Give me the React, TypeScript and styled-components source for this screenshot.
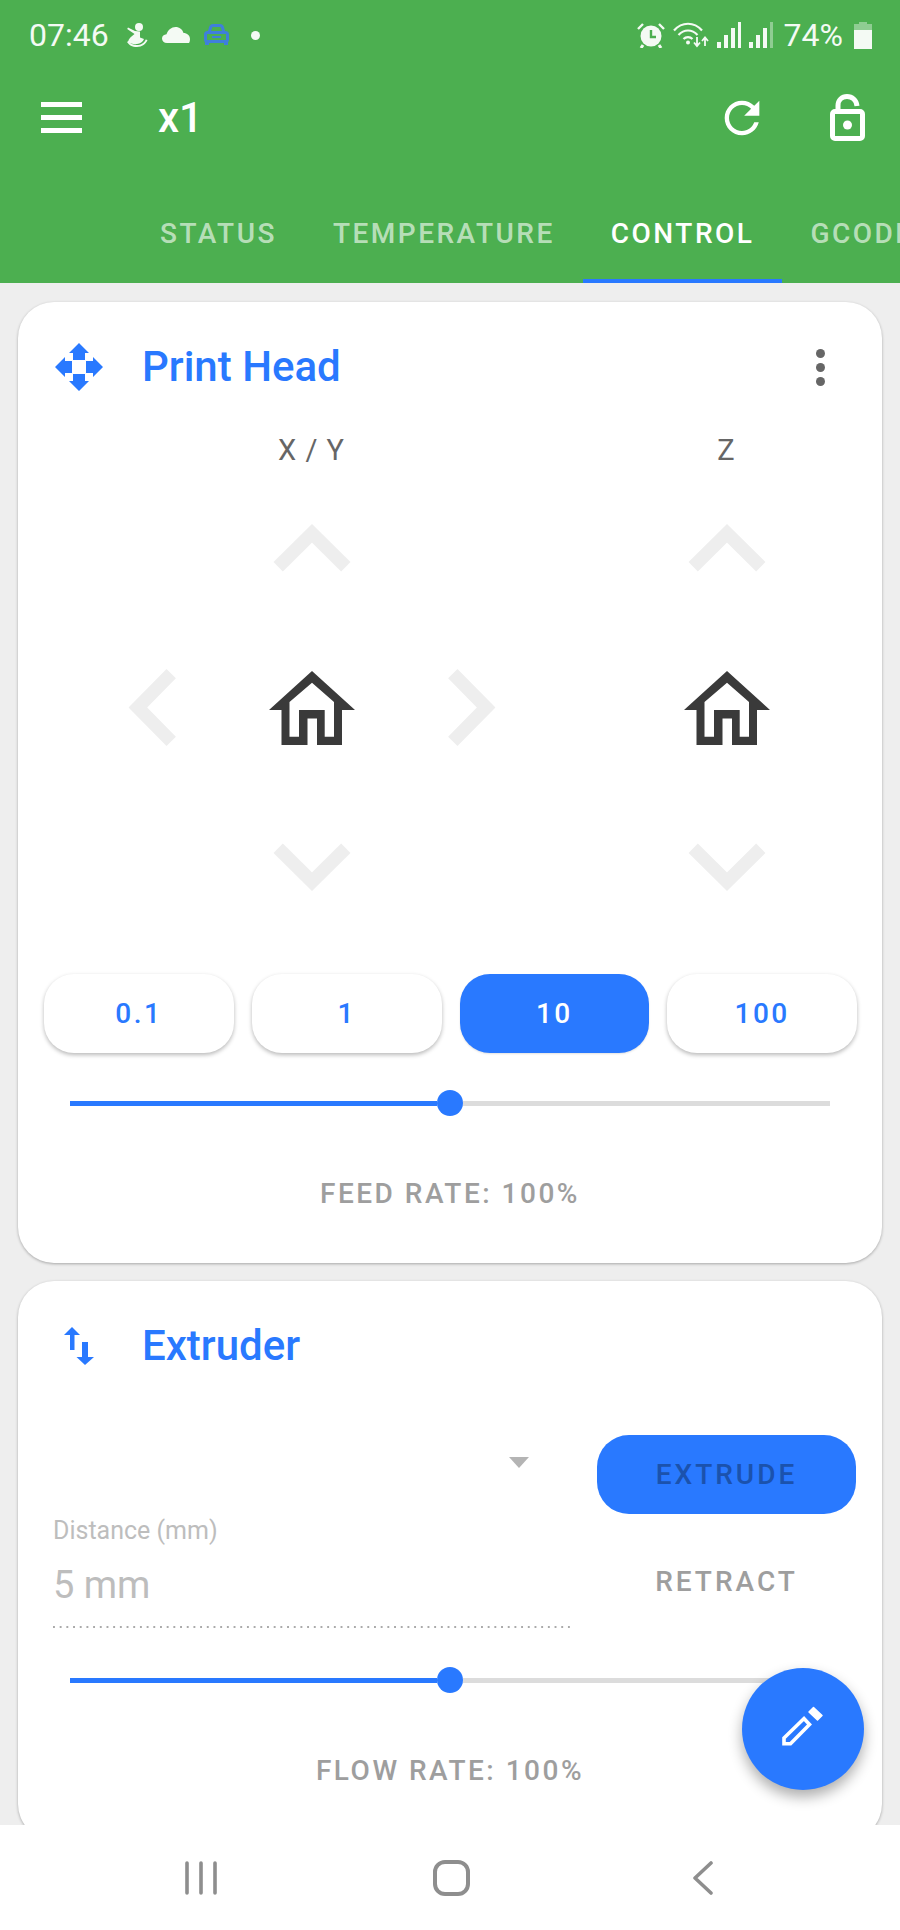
import React from 'react'
import styled, { createGlobalStyle } from 'styled-components'

const BLUE = '#2979ff'
const GREEN = '#4caf50'

const GlobalStyle = createGlobalStyle`
    html, body {
        margin: 0;
        padding: 0;
        background: #eeeeee;
        font-family: Roboto, "Liberation Sans", sans-serif;
    }
`

const Page = styled.div`
    position: relative;
    width: 900px;
    height: 1930px;
    display: flex;
    flex-direction: column;
    overflow: hidden;
    background: #eeeeee;
`

const AppBar = styled.header`
    height: 283px;
    flex: none;
    background: ${GREEN};
    color: #fff;
`

const StatusBar = styled.div`
    height: 70px;
    padding: 0 28px 0 29px;
    display: flex;
    align-items: center;
    justify-content: space-between;
`

const StatusGroup = styled.div`
    display: flex;
    align-items: center;
    gap: 14px;
`

const StatusRight = styled(StatusGroup)`
    gap: 8px;
`

const StatusText = styled.span`
    font-size: 32px;
    line-height: 40px;
    color: #f4faf4;
    margin: 0 3px;
`

const Clock = styled(StatusText)`
    margin: 0 3px 0 0;
`

const Dot = styled.span`
    width: 9px;
    height: 9px;
    margin-left: 8px;
    border-radius: 50%;
    background: #f4faf4;
`

const Toolbar = styled.div`
    height: 95px;
    padding: 0 35px 0 41px;
    display: flex;
    align-items: center;
`

const Burger = styled.div`
    width: 41px;
    display: flex;
    flex-direction: column;
    gap: 8px;

    span {
        height: 5px;
        background: #fff;
    }
`

const AppTitle = styled.div`
    margin-left: 76px;
    font-size: 42px;
    font-weight: 500;
    line-height: 50px;
`

const ToolbarActions = styled.div`
    margin-left: auto;
    display: flex;
    align-items: center;
    gap: 62px;
`

const Tabs = styled.nav`
    margin-top: 18px;
    height: 100px;
    padding-left: 132px;
    display: flex;
    overflow: hidden;
`

const Tab = styled.div<{ $active?: boolean }>`
    flex: none;
    padding: 0 28px;
    display: flex;
    align-items: center;
    box-sizing: border-box;
    font-size: 28px;
    font-weight: 500;
    letter-spacing: 2.5px;
    color: ${p => p.$active ? '#fff' : 'rgba(255,255,255,.62)'};
    border-bottom: 4px solid ${p => p.$active ? BLUE : 'transparent'};
    padding-top: 4px;
`

const Content = styled.main`
    flex: 1;
    min-height: 0;
    padding: 19px 18px 0;
    display: flex;
    flex-direction: column;
    gap: 18px;
    overflow: hidden;
`

const Card = styled.section`
    flex: none;
    background: #fff;
    border-radius: 36px;
    box-shadow: 0 1px 3px rgba(0,0,0,.3);
    padding-bottom: 52px;
`

const CardHeader = styled.div`
    height: 130px;
    padding: 0 37px;
    display: flex;
    align-items: center;
`

const CardIcon = styled.div`
    width: 87px;
    display: flex;
`

const CardTitle = styled.h2`
    margin: 0;
    font-size: 42px;
    font-weight: 500;
    line-height: 50px;
    color: ${BLUE};
`

const Kebab = styled.div`
    margin-left: auto;
    margin-right: 20px;
    display: flex;
    flex-direction: column;
    gap: 5px;

    span {
        width: 9px;
        height: 9px;
        border-radius: 50%;
        background: #666;
    }
`

const JogArea = styled.div`
    padding-left: 55px;
    display: flex;
    gap: 97px;
`

const JogColumn = styled.div`
    display: flex;
    flex-direction: column;
    align-items: center;
`

const AxisLabel = styled.div`
    height: 36px;
    margin-bottom: 1px;
    font-size: 29px;
    line-height: 36px;
    letter-spacing: 1px;
    color: #666;
`

const JogGrid = styled.div<{ $cols: number }>`
    display: grid;
    grid-template-columns: repeat(${p => p.$cols}, 159px);
    grid-template-rows: repeat(3, 159px);
    place-items: center;
`

const JogCell = styled.div<{ $col: number; $row: number }>`
    grid-column: ${p => p.$col};
    grid-row: ${p => p.$row};
    display: flex;
`

const StepRow = styled.div`
    margin-top: 28px;
    padding: 0 25px 0 26px;
    display: grid;
    grid-template-columns: repeat(4, 1fr);
    gap: 18px;
`

const StepButton = styled.button<{ $active?: boolean }>`
    height: 79px;
    padding: 0;
    border: 0;
    border-radius: 30px;
    font-family: inherit;
    font-size: 28px;
    font-weight: 500;
    letter-spacing: 2.5px;
    background: ${p => p.$active ? BLUE : '#fff'};
    color: ${p => p.$active ? '#fff' : BLUE};
    box-shadow: ${p => p.$active ? '0 1px 2px rgba(0,0,0,.12)' : '0 2px 4px rgba(0,0,0,.28)'};
`

const SliderRow = styled.div`
    margin: 37px 52px 0;
    height: 26px;
    display: flex;
    align-items: center;
`

const SliderFill = styled.div`
    height: 5px;
    background: ${BLUE};
`

const SliderThumb = styled.div`
    flex: none;
    width: 26px;
    height: 26px;
    border-radius: 50%;
    background: ${BLUE};
`

const SliderRest = styled.div`
    height: 5px;
    background: #dcdcdc;
`

const RateLabel = styled.div`
    margin-top: 61px;
    height: 34px;
    text-align: center;
    font-size: 28px;
    font-weight: 500;
    line-height: 34px;
    letter-spacing: 2.5px;
    color: #9e9e9e;
`

const ExtrudeForm = styled.div`
    margin-top: 24px;
    padding: 0 26px 0 35px;
    display: grid;
    grid-template-columns: 518px 259px;
    column-gap: 26px;
`

const Field = styled.div`
    display: flex;
    flex-direction: column;
`

const SelectRow = styled.div`
    height: 54px;
    padding-right: 42px;
    display: flex;
    align-items: center;
    justify-content: flex-end;
`

const SelectCaret = styled.div`
    width: 0;
    height: 0;
    border-left: 10.5px solid transparent;
    border-right: 10.5px solid transparent;
    border-top: 11px solid #b4b4b4;
`

const FieldLabel = styled.div`
    margin-top: 27px;
    font-size: 25px;
    line-height: 30px;
    color: #bdbdbd;
`

const FieldValue = styled.div`
    margin-top: 14px;
    padding-bottom: 18px;
    font-size: 38px;
    line-height: 50px;
    color: #bdbdbd;
    background-image: linear-gradient(to right, #aaa 2px, transparent 2px);
    background-size: 6.7px 2px;
    background-repeat: repeat-x;
    background-position: left bottom;
`

const ActionColumn = styled.div`
    display: flex;
    flex-direction: column;
    gap: 28px;
`

const ActionButton = styled.button<{ $primary?: boolean }>`
    height: 79px;
    padding: 0;
    border: 0;
    border-radius: 32px;
    font-family: inherit;
    font-size: 28px;
    font-weight: 500;
    letter-spacing: 3px;
    background: ${p => p.$primary ? BLUE : 'transparent'};
    color: ${p => p.$primary ? '#1b52ad' : '#9e9e9e'};
`

const ExtruderSlider = styled(SliderRow)`
    margin-top: 39px;
`

const NavBar = styled.footer`
    position: relative;
    z-index: 2;
    height: 105px;
    flex: none;
    background: #fff;
    padding-left: 185px;
    display: grid;
    grid-template-columns: 248px 260px 20px;
    justify-items: start;
    align-items: center;
`

const Fab = styled.button`
    position: absolute;
    z-index: 1;
    right: 36px;
    bottom: 140px;
    width: 122px;
    height: 122px;
    padding: 0;
    border: 0;
    border-radius: 50%;
    background: ${BLUE};
    box-shadow: 0 7px 14px rgba(0,0,0,.32);
    display: flex;
    align-items: center;
    justify-content: center;
`

const ChevronSvg = styled.svg<{ $turn: number }>`
    transform: rotate(${p => p.$turn}deg);
`

const Chevron: React.FC<{ turn?: number }> = ({ turn = 0 }) => (
    <ChevronSvg $turn={turn} width="78" height="49" viewBox="0 0 78 49">
        <polyline points="5.2,42.7 39,9.3 72.8,42.7" fill="none" stroke="#eeeeee" strokeWidth="13.2" />
    </ChevronSvg>
)

const HomeIcon = () => (
    <svg width="86" height="74" viewBox="0 0 86 74">
        <path
            fillRule="evenodd"
            fill="#3a3a3a"
            d="M43 0L86 39H73V74H48V47.5H38.5V74H12.5V39H0ZM43 11.7L20.5 31V65.7H30V39H55.7V65.7H65V31Z"
        />
    </svg>
)

const MoveIcon = () => (
    <svg width="48" height="48" viewBox="-24 -24 48 48" fill={BLUE}>
        {[0, 90, 180, 270].map(a => (
            <polygon key={a} transform={`rotate(${a})`} points="0,-24 10,-14 6,-14 6,-7 -6,-7 -6,-14 -10,-14" />
        ))}
    </svg>
)

const SwapIcon = () => (
    <svg width="31" height="38" viewBox="0 0 31 38" fill={BLUE} style={{ marginLeft: 8 }}>
        <polygon points="9,0 17,8 11.5,8 11.5,23 7,23 7,8 1,8" />
        <polygon points="22,38 13.5,30 19,30 19,15 25,15 25,30 31,30" />
    </svg>
)

const RefreshIcon = () => (
    <svg width="52" height="52" viewBox="0 0 24 24" fill="#fff">
        <path d="M17.65 6.35C16.2 4.9 14.21 4 12 4c-4.42 0-7.99 3.58-7.99 8s3.57 8 7.99 8c3.73 0 6.84-2.55 7.73-6h-2.08c-.82 2.33-3.04 4-5.65 4-3.31 0-6-2.69-6-6s2.69-6 6-6c1.66 0 3.14.69 4.22 1.78L13 11h7V4l-2.35 2.35z" />
    </svg>
)

const LockIcon = () => (
    <svg width="35" height="47" viewBox="0 0 35 47" fill="none" stroke="#fff" strokeWidth="5">
        <rect x="2.5" y="17.5" width="30" height="27" rx="2.5" />
        <path d="M8 17V11.5C8 6 12 2.5 17 2.5S26.5 6 27 12" />
        <circle cx="17.5" cy="31" r="4.5" fill="#fff" stroke="none" />
    </svg>
)

const PencilIcon = () => (
    <svg width="70" height="70" viewBox="0 0 70 70" fill="#fff">
        <polygon
            points="16,44 36,24.5 41.5,30.5 22.5,49.8 16,49.8"
            fill="none"
            stroke="#fff"
            strokeWidth="3.6"
        />
        <polygon points="41,18 45.5,13.5 54,21.5 49.5,26" stroke="#fff" strokeWidth="1.5" strokeLinejoin="round" />
    </svg>
)

// status bar glyphs
const BabyIcon = () => (
    <svg width="22" height="26" viewBox="0 0 22 26" fill="#f4faf4">
        <circle cx="13" cy="5" r="4" />
        <path d="M9 9L2 5.5l-.8 1.5L8.5 12C5 14.5 2.5 17 2 20c2 1.500 6 2.500 9 2 3-.500 6-2 7-5l-4-1.500V9.500z" />
        <path d="M1 20c2 3 5 5 10 5s9-3 10.500-7l-1.800-.6C18.500 20.500 15 23 11 23S4 21.500 2.500 19z" />
    </svg>
)

const CloudIcon = () => (
    <svg width="28" height="16" viewBox="0 0 28 16" fill="#f4faf4">
        <path d="M5 16C2 16 0 14 0 11.500S2 7.500 4.500 7.300C6 3 9.500 0 13.500 0c4 0 7 2.500 8 6 3.500 0 6.500 2.500 6.500 6 0 1.500-.3 3-1 4z" />
    </svg>
)

const CarIcon = () => (
    <svg width="25" height="22" viewBox="0 0 25 22" fill="none" stroke="#3f7fdb" strokeWidth="3">
        <path d="M5 9L6.500 3.500C7 2 8 1.500 9 1.500H16C17 1.500 18 2 18.500 3.500L20 9" />
        <rect x="1.500" y="8.500" width="22" height="9" rx="2" />
        <path d="M3 18v3M22 18v3" strokeWidth="4" />
        <path d="M8 13h9" strokeWidth="2" />
    </svg>
)

const AlarmIcon = () => (
    <svg width="28" height="25" viewBox="0 0 28 25">
        <circle cx="14" cy="13" r="10.500" fill="#f4faf4" />
        <path d="M14 7v7h5" fill="none" stroke={GREEN} strokeWidth="2.400" />
        <path d="M1 6l5-5M27 6l-5-5" stroke="#f4faf4" strokeWidth="2.400" />
        <path d="M6 22l-2 3M22 22l2 3" stroke="#f4faf4" strokeWidth="3" />
    </svg>
)

const WifiIcon = () => (
    <svg width="36" height="26" viewBox="0 0 36 26" fill="none" stroke="#f4faf4" strokeWidth="2.200">
        <path d="M1 8.500C9-.5 21-.5 29 8.500" />
        <path d="M5.500 13C11 7 19 7 24.500 13" />
        <path d="M10.500 17C13 14.500 17 14.500 19.500 17" />
        <circle cx="15" cy="20.500" r="2" fill="#f4faf4" stroke="none" />
        <path d="M24 15v8M21 20.500l3 3.500 3-3.500M32 24v-8M29 19l3-3.500 3 3.500" strokeWidth="1.800" />
    </svg>
)

const SignalIcon: React.FC<{ faded?: boolean }> = ({ faded }) => (
    <svg width="24" height="26" viewBox="0 0 24 26" fill="#f4faf4">
        <rect x="0" y="20" width="4" height="6" />
        <rect x="7" y="13" width="4" height="13" />
        <rect x="14" y="6" width="4" height="20" />
        <rect x="21" y="0" width="3" height="26" opacity={faded ? 0.4 : 1} />
    </svg>
)

const BatteryIcon = () => (
    <svg width="18" height="27" viewBox="0 0 18 27" fill="#f4faf4">
        <path d="M5 0h8v2h5v6H0V2h5z" opacity=".4" />
        <rect x="0" y="8" width="18" height="19" />
    </svg>
)

const RecentsIcon = () => (
    <svg width="32" height="34" viewBox="0 0 32 34" stroke="#8e8e8e" strokeWidth="3.600" strokeLinecap="round">
        <path d="M2 2V32M16 2V32M30 2V32" />
    </svg>
)

const NavHomeIcon = () => (
    <svg width="37" height="36" viewBox="0 0 37 36" fill="none" stroke="#8e8e8e" strokeWidth="4">
        <rect x="2" y="2" width="33" height="32" rx="10" />
    </svg>
)

const BackIcon = () => (
    <svg width="20" height="34" viewBox="0 0 20 34" fill="none" stroke="#8e8e8e" strokeWidth="3.600" strokeLinecap="round" strokeLinejoin="round">
        <polyline points="18,2 2,17 18,32" />
    </svg>
)

const Slider: React.FC<{ value: number; as?: typeof SliderRow }> = ({ value, as: Row = SliderRow }) => (
    <Row>
        <SliderFill style={{ flex: value }} />
        <SliderThumb />
        <SliderRest style={{ flex: 100 - value }} />
    </Row>
)

const STEPS = ['0.1', '1', '10', '100']

export default function App() {
    return (
        <Page>
            <GlobalStyle />
            <AppBar>
                <StatusBar>
                    <StatusGroup>
                        <Clock>07:46</Clock>
                        <BabyIcon />
                        <CloudIcon />
                        <CarIcon />
                        <Dot />
                    </StatusGroup>
                    <StatusRight>
                        <AlarmIcon />
                        <WifiIcon />
                        <SignalIcon />
                        <SignalIcon faded />
                        <StatusText>74%</StatusText>
                        <BatteryIcon />
                    </StatusRight>
                </StatusBar>
                <Toolbar>
                    <Burger><span /><span /><span /></Burger>
                    <AppTitle>x1</AppTitle>
                    <ToolbarActions>
                        <RefreshIcon />
                        <LockIcon />
                    </ToolbarActions>
                </Toolbar>
                <Tabs>
                    <Tab>STATUS</Tab>
                    <Tab>TEMPERATURE</Tab>
                    <Tab $active>CONTROL</Tab>
                    <Tab>GCODE</Tab>
                </Tabs>
            </AppBar>

            <Content>
                <Card>
                    <CardHeader>
                        <CardIcon><MoveIcon /></CardIcon>
                        <CardTitle>Print Head</CardTitle>
                        <Kebab><span /><span /><span /></Kebab>
                    </CardHeader>
                    <JogArea>
                        <JogColumn>
                            <AxisLabel>X / Y</AxisLabel>
                            <JogGrid $cols={3}>
                                <JogCell $col={2} $row={1}><Chevron /></JogCell>
                                <JogCell $col={1} $row={2}><Chevron turn={270} /></JogCell>
                                <JogCell $col={2} $row={2}><HomeIcon /></JogCell>
                                <JogCell $col={3} $row={2}><Chevron turn={90} /></JogCell>
                                <JogCell $col={2} $row={3}><Chevron turn={180} /></JogCell>
                            </JogGrid>
                        </JogColumn>
                        <JogColumn>
                            <AxisLabel>Z</AxisLabel>
                            <JogGrid $cols={1}>
                                <JogCell $col={1} $row={1}><Chevron /></JogCell>
                                <JogCell $col={1} $row={2}><HomeIcon /></JogCell>
                                <JogCell $col={1} $row={3}><Chevron turn={180} /></JogCell>
                            </JogGrid>
                        </JogColumn>
                    </JogArea>
                    <StepRow>
                        {STEPS.map(step => <StepButton key={step} $active={step === '10'}>{step}</StepButton>)}
                    </StepRow>
                    <Slider value={50} />
                    <RateLabel>FEED RATE: 100%</RateLabel>
                </Card>

                <Card>
                    <CardHeader>
                        <CardIcon><SwapIcon /></CardIcon>
                        <CardTitle>Extruder</CardTitle>
                    </CardHeader>
                    <ExtrudeForm>
                        <Field>
                            <SelectRow><SelectCaret /></SelectRow>
                            <FieldLabel>Distance (mm)</FieldLabel>
                            <FieldValue>5 mm</FieldValue>
                        </Field>
                        <ActionColumn>
                            <ActionButton $primary>EXTRUDE</ActionButton>
                            <ActionButton>RETRACT</ActionButton>
                        </ActionColumn>
                    </ExtrudeForm>
                    <Slider value={50} as={ExtruderSlider} />
                    <RateLabel>FLOW RATE: 100%</RateLabel>
                </Card>
            </Content>

            <Fab><PencilIcon /></Fab>

            <NavBar>
                <RecentsIcon />
                <NavHomeIcon />
                <BackIcon />
            </NavBar>
        </Page>
    )
}
